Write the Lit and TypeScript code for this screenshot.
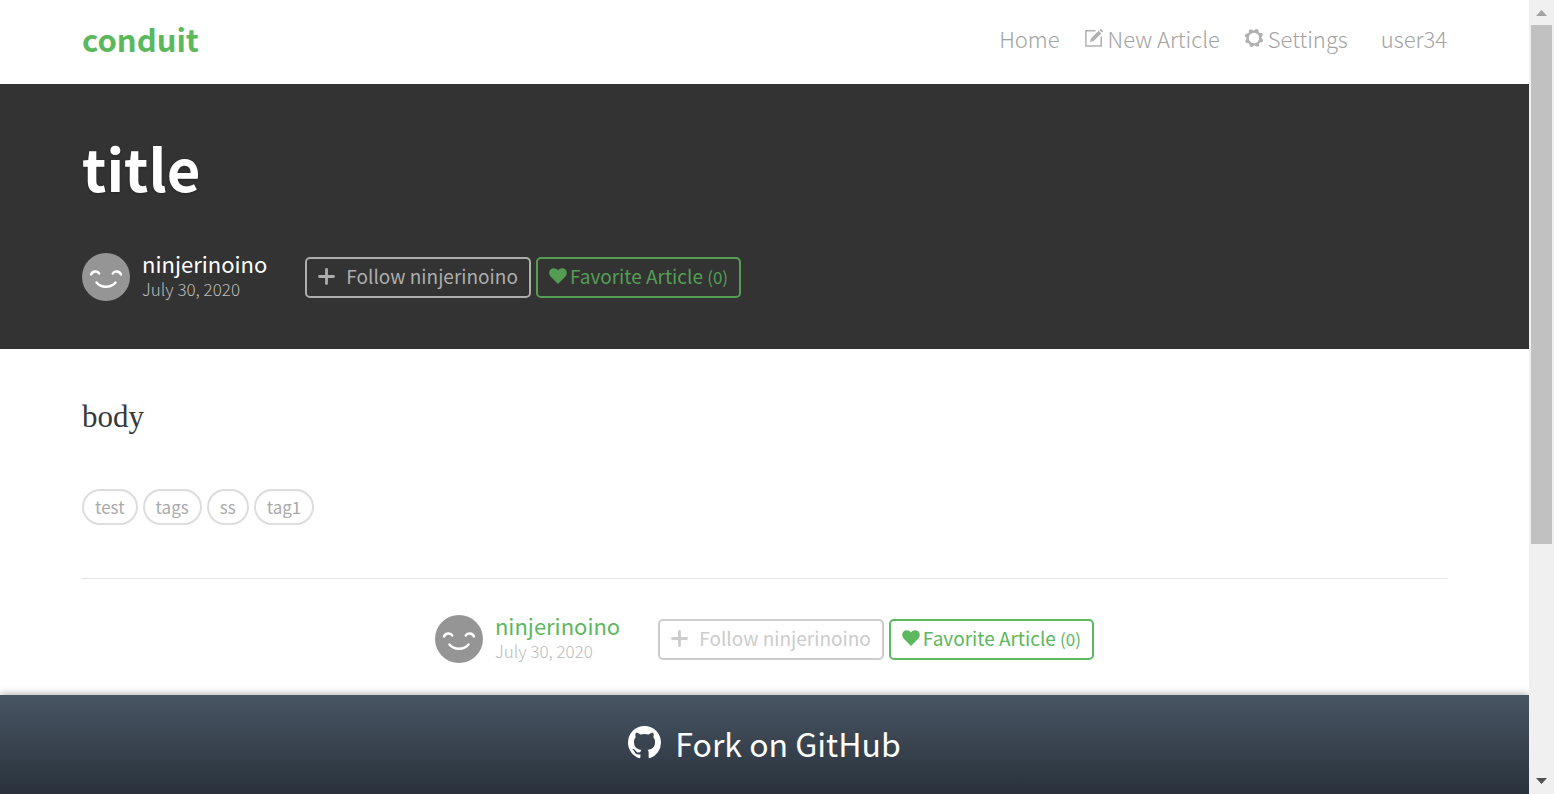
import { LitElement, html, css, svg } from "lit";
import { customElement, property } from "lit/decorators.js";

const heart = svg`<path d="M9 16 1.800 8.700C-.4 6.400-.2 3 1.800 1.300 4-.5 7.300 0 9 2.500 10.700 0 14-.5 16.200 1.300 18.200 3 18.400 6.400 16.200 8.700Z" fill="currentColor"/>`;

@customElement("article-meta")
export class ArticleMeta extends LitElement {
  @property() author = "";
  @property() date = "";
  @property({ type: Number }) favorites = 0;
  @property({ type: Boolean, reflect: true }) dark = false;

  static styles = css`
    :host { display: flex; align-items: center; gap: 38px; }
    .info { display: flex; align-items: center; gap: 12px; }
    .avatar { display: block; width: 48px; height: 48px; }
    .names { display: flex; flex-direction: column; margin: -3px 0 1px; }
    .author { color: #5cb85c; font-size: 22px; line-height: 27px; text-decoration: none; }
    .date { color: #bbb; font-size: 17px; line-height: 23px; font-weight: 300; }
    .actions { display: flex; gap: 5px; }
    button {
      display: flex; align-items: center; height: 41px; padding: 0 11px 4px; margin: 0;
      border: 2px solid currentColor; border-radius: 5px; background: transparent;
      font: inherit; font-size: 19px; line-height: 27px; white-space: nowrap; cursor: pointer;
    }
    .follow { color: #ccc; gap: 11px; }
    .favorite { color: #5cb85c; gap: 3px; }
    .count { font-size: 17px; line-height: 1; }
    .plus { width: 17px; height: 17px; margin-top: 2px; }
    .heart { width: 18px; height: 16px; margin-top: 2px; }
    :host([dark]) .author { color: #fff; }
    :host([dark]) .follow { color: #adadad; }
    :host([dark]) .favorite { color: #549e54; }
  `;

  render() {
    return html`
      <div class="info">
        <a href="#" aria-label=${this.author}>
          <svg class="avatar" viewBox="0 0 48 48" aria-hidden="true">
            <circle cx="24" cy="24" r="24" fill="#959595" />
            <g fill="none" stroke="#fff" stroke-width="2.500" stroke-linecap="round">
              <path d="M9 21.400c1.500-3.600 6.700-4 8.200-.9" />
              <path d="M30.800 20.500c1.500-3.100 6.700-2.700 8.200.9" />
              <path d="M14.500 29.500c4.500 5.600 14.500 5.600 19 0" />
            </g>
          </svg>
        </a>
        <div class="names">
          <a class="author" href="#">${this.author}</a>
          <span class="date">${this.date}</span>
        </div>
      </div>
      <div class="actions">
        <button class="follow" type="button">
          <svg class="plus" viewBox="0 0 17 17" aria-hidden="true">
            <path d="M8.500 1.500v14M1.500 8.500h14" stroke="currentColor" stroke-width="2.800" stroke-linecap="round" />
          </svg>
          <span>Follow ${this.author}</span>
        </button>
        <button class="favorite" type="button">
          <svg class="heart" viewBox="0 0 18 16" aria-hidden="true">${heart}</svg>
          <span>Favorite Article <span class="count">(${this.favorites})</span></span>
        </button>
      </div>
    `;
  }
}

@customElement("app-root")
export class AppRoot extends LitElement {
  private tags = ["test", "tags", "ss", "tag1"];

  static styles = css`
    :host {
      display: flex; height: 100vh; background: #fff; color: #373a3c;
      font-family: "Noto Sans CJK SC", "Noto Sans", sans-serif;
    }
    .page { flex: 1; min-width: 0; display: flex; flex-direction: column; }
    .scroll { flex: 1; min-height: 0; overflow: hidden; }
    .container { box-sizing: content-box; max-width: 1365px; margin: 0 auto; padding: 0 24px; }
    .bar { display: flex; align-items: center; justify-content: space-between; height: 84px; }
    .brand { color: #5cb85c; font-size: 31px; line-height: 40px; font-weight: 700; text-decoration: none; padding-bottom: 6px; }
    .links { display: flex; gap: 25px; margin: 0; padding: 0 0 8px; list-style: none; }
    .link { display: flex; align-items: center; gap: 5px; color: #a3a3a3; font-size: 22px; line-height: 32px; font-weight: 300; text-decoration: none; }
    .user { padding-left: 8px; }
    .icon { width: 18px; height: 18px; color: #b0b0b0; }
    .hero { background: #333; padding: 46px 0 48px; }
    h1 { margin: 0 0 49px; color: #fff; font-size: 58px; line-height: 74px; font-weight: 700; text-shadow: 0 1px 3px rgba(0, 0, 0, 0.3); }
    .body { margin: 0; padding: 46px 0 50px; font-family: "Liberation Serif", serif; font-size: 31px; line-height: 44px; }
    .tags { display: flex; gap: 5px; margin: 0; padding: 0; list-style: none; }
    .tag { border: 2px solid #ddd; border-radius: 18px; padding: 0 11px; color: #aaa; font-size: 17px; line-height: 32px; }
    hr { border: 0; border-top: 1px solid #e5e5e5; margin: 53px 0 36px; }
    .center { display: flex; justify-content: center; }
    .fork {
      box-sizing: border-box; display: flex; align-items: center; justify-content: center; gap: 14px;
      height: 99px; padding-bottom: 4px;
      background: linear-gradient(#485563, #29323c); box-shadow: 0 0 8px rgba(0, 0, 0, 0.4);
      color: #fff; font-size: 32px; line-height: 48px; text-decoration: none;
    }
    .github { width: 33px; height: 33px; }
    .track { width: 25px; display: flex; flex-direction: column; align-items: center; background: #f0f0f0; }
    .arrow { width: 25px; height: 25px; }
    .rail { flex: 1; width: 21px; }
    .thumb { height: 69.8%; background: #c1c1c1; }
  `;

  render() {
    return html`
      <div class="page">
        <div class="scroll">
          <nav class="container bar">
            <a class="brand" href="#">conduit</a>
            <ul class="links">
              <li><a class="link" href="#">Home</a></li>
              <li>
                <a class="link" href="#">
                  <svg class="icon" viewBox="0 0 18 18" aria-hidden="true">
                    <path d="M10.500 1.800H.9v15.300h15.300V7.500" fill="none" stroke="currentColor" stroke-width="1.500" />
                    <path d="m5 13 .9-3.600L13.600 1.700l2.700 2.700-7.700 7.700ZM14.400.9l.9-.8q.5-.3 1 .1l1.500 1.500q.4.500 0 1l-.8.9Z" fill="currentColor" />
                  </svg>
                  New Article
                </a>
              </li>
              <li>
                <a class="link" href="#">
                  <svg class="icon" viewBox="0 0 18 18" aria-hidden="true">
                    <circle cx="9" cy="9" r="6.300" fill="none" stroke="currentColor" stroke-width="2.200" />
                    <g fill="currentColor">
                      ${[22, 67, 112, 157, 202, 247, 292, 337].map(
                        (a) => svg`<path d="M6 2.900 7.400-.3h2.200l2.400 3.200Z" transform="rotate(${a} 9 9)"/>`
                      )}
                    </g>
                  </svg>
                  Settings
                </a>
              </li>
              <li><a class="link user" href="#">user34</a></li>
            </ul>
          </nav>
          <header class="hero">
            <div class="container">
              <h1>title</h1>
              <article-meta dark author="ninjerinoino" date="July 30, 2020"></article-meta>
            </div>
          </header>
          <main class="container">
            <p class="body">body</p>
            <ul class="tags">
              ${this.tags.map((t) => html`<li class="tag">${t}</li>`)}
            </ul>
            <hr />
            <div class="center">
              <article-meta author="ninjerinoino" date="July 30, 2020"></article-meta>
            </div>
          </main>
        </div>
        <a class="fork" href="#">
          <svg class="github" viewBox="0 0 16 16" aria-hidden="true">
            <path fill="currentColor" d="M8 0C3.580 0 0 3.580 0 8c0 3.540 2.290 6.530 5.470 7.590.4.070.55-.17.55-.38 0-.19-.01-.82-.01-1.490-2.010.37-2.530-.49-2.690-.94-.09-.23-.48-.94-.82-1.130-.28-.15-.68-.52-.01-.53.63-.01 1.080.58 1.230.82.72 1.210 1.870.87 2.330.66.07-.52.28-.87.51-1.070-1.780-.2-3.640-.89-3.640-3.950 0-.87.31-1.590.82-2.150-.08-.2-.36-1.020.08-2.120 0 0 .67-.21 2.200.82.64-.18 1.320-.27 2-.27s1.360.09 2 .27c1.530-1.040 2.200-.82 2.200-.82.44 1.100.16 1.920.08 2.120.51.56.82 1.270.82 2.150 0 3.070-1.870 3.750-3.650 3.950.29.25.54.73.54 1.480 0 1.070-.01 1.930-.01 2.200 0 .21.15.46.55.38A8.010 8.010 0 0 0 16 8c0-4.420-3.580-8-8-8Z" />
          </svg>
          <span>Fork on GitHub</span>
        </a>
      </div>
      <div class="track" aria-hidden="true">
        <svg class="arrow" viewBox="0 0 25 25"><path d="M7 16h11l-5.500-6Z" fill="#a3a3a3" /></svg>
        <div class="rail"><div class="thumb"></div></div>
        <svg class="arrow" viewBox="0 0 25 25"><path d="M7 9h11l-5.500 6Z" fill="#505050" /></svg>
      </div>
    `;
  }
}
